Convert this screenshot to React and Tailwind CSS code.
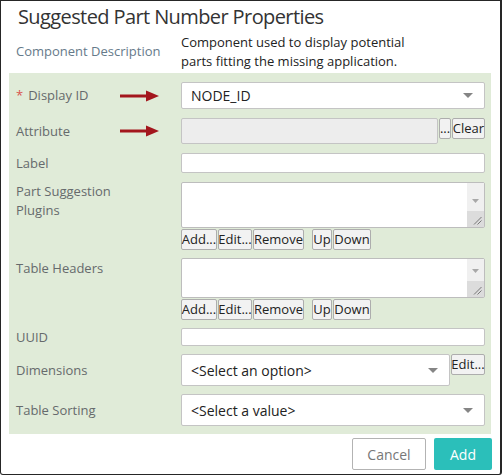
import React from "react";

function Arrow() {
  return (
    <svg width="40" height="12" viewBox="0 0 40 12" className="shrink-0 mr-[21px]">
      <rect x="0" y="4.5" width="28" height="3" fill="#a3161d" />
      <polygon points="26,0.5 39,6 26,11.5" fill="#a3161d" />
    </svg>
  );
}

function Caret() {
  return (
    <svg width="10" height="5" viewBox="0 0 10 5" className="shrink-0">
      <polygon points="0,0 10,0 5,5" fill="#858585" />
    </svg>
  );
}

function Btn({ children, className = "" }) {
  return (
    <div
      className={
        "h-[21px] flex items-center justify-center border border-[#adadad] bg-[#f2f2f2] rounded-[2px] text-[13px] text-[#222] leading-none " +
        className
      }
    >
      {children}
    </div>
  );
}

function Label({ children, className = "" }) {
  return (
    <div className={"text-[13px] leading-[19px] text-[#666a6c] " + className}>
      {children}
    </div>
  );
}

function ListBox({ h }) {
  return (
    <div className={"flex border border-[#bdbdbd] bg-white rounded-[2px] " + h}>
      <div className="flex-1" />
      <div className="w-[17px] flex flex-col">
        <div className="flex-1 bg-[#f0f0f0] flex items-end justify-center pb-[8px]">
          <svg width="7" height="4" viewBox="0 0 7 4">
            <polygon points="0,0 7,0 3.5,4" fill="#a8a8a8" />
          </svg>
        </div>
        <div className="h-[16px] bg-[#dcdcdc] flex items-end justify-end pr-[2px] pb-[2px]">
          <svg width="9" height="9" viewBox="0 0 9 9">
            <line x1="1" y1="8.5" x2="8.5" y2="1" stroke="#777" strokeWidth="1" />
            <line x1="4.5" y1="8.5" x2="8.5" y2="4.5" stroke="#777" strokeWidth="1" />
          </svg>
        </div>
      </div>
    </div>
  );
}

function ListButtons() {
  return (
    <div className="flex mt-[1px]">
      <Btn className="w-[36px]">Add...</Btn>
      <Btn className="w-[34px] ml-[1px]">Edit...</Btn>
      <Btn className="w-[51px] ml-[1px]">Remove</Btn>
      <Btn className="w-[20px] ml-[8px]">Up</Btn>
      <Btn className="w-[38px] ml-[1px]">Down</Btn>
    </div>
  );
}

export default function App() {
  return (
    <div className="w-[502px] h-[475px] bg-white font-['Open_Sans','Noto_Sans',sans-serif]">
      <div className="w-[502px] h-[475px] border border-r-2 border-[#262626] rounded-b-[3px] flex flex-col">
        <div className="pl-[17px] pt-[2px] text-[20px] leading-[28px] tracking-[-0.6px] text-[#333]">
          Suggested Part Number Properties
        </div>
        <div className="flex mt-[2px]">
          <div className="w-[180px] pl-[15px] pt-[9px] text-[13px] leading-[19px] text-[#667a8a]">
            Component Description
          </div>
          <div className="text-[13px] leading-[19px] text-[#222]">
            Component used to display potential
            <br />
            parts fitting the missing application.
          </div>
        </div>
        <div className="ml-[8px] mt-[2px] w-[482px] bg-[#e0ebd8] pl-[7px] pr-[6px] pt-[9px] pb-[8px] flex flex-col">
          {/* Display ID */}
          <div className="flex h-[27px]">
            <div className="w-[165px] flex items-center justify-between">
              <Label className="text-[#333]">
                <span className="text-[#d9534f] mr-[5px]">*</span>Display ID
              </Label>
              <Arrow />
            </div>
            <div className="flex-1 flex items-center justify-between border border-[#c4c4c4] bg-white rounded-[2px] pl-[9px] pr-[11px]">
              <span className="text-[14px] text-[#222]">NODE_ID</span>
              <Caret />
            </div>
          </div>
          {/* Attribute */}
          <div className="flex h-[26px] mt-[9px]">
            <div className="w-[165px] flex items-center justify-between">
              <Label>Attribute</Label>
              <Arrow />
            </div>
            <div className="flex-1 border border-[#c4c4c4] bg-[#ededed] rounded-[2px]" />
            <Btn className="w-[12px] h-[20px] ml-[1px] self-start">...</Btn>
            <Btn className="w-[33px] h-[20px] ml-[1px] self-start">Clear</Btn>
          </div>
          {/* Label */}
          <div className="flex h-[20px] mt-[9px]">
            <div className="w-[165px] flex items-center">
              <Label>Label</Label>
            </div>
            <div className="flex-1 border border-[#c4c4c4] bg-white rounded-[2px]" />
          </div>
          {/* Part Suggestion Plugins */}
          <div className="flex mt-[9px]">
            <div className="w-[165px]">
              <Label>
                Part Suggestion
                <br />
                Plugins
              </Label>
            </div>
            <div className="flex-1 flex flex-col">
              <ListBox h="h-[46px]" />
              <ListButtons />
            </div>
          </div>
          {/* Table Headers */}
          <div className="flex mt-[8px]">
            <div className="w-[165px] pt-[1px]">
              <Label>Table Headers</Label>
            </div>
            <div className="flex-1 flex flex-col">
              <ListBox h="h-[40px]" />
              <ListButtons />
            </div>
          </div>
          {/* UUID */}
          <div className="flex h-[18px] mt-[8px]">
            <div className="w-[165px] flex items-center">
              <Label>UUID</Label>
            </div>
            <div className="flex-1 border border-[#c4c4c4] bg-white rounded-[2px]" />
          </div>
          {/* Dimensions */}
          <div className="flex h-[32px] mt-[8px]">
            <div className="w-[165px] flex items-center">
              <Label>Dimensions</Label>
            </div>
            <div className="flex-1 flex items-center justify-between border border-[#c4c4c4] bg-white rounded-[2px] pl-[9px] pr-[11px]">
              <span className="text-[14px] text-[#222]">&lt;Select an option&gt;</span>
              <Caret />
            </div>
            <Btn className="w-[34px] ml-[1px] self-start">Edit...</Btn>
          </div>
          {/* Table Sorting */}
          <div className="flex h-[32px] mt-[8px]">
            <div className="w-[165px] flex items-center">
              <Label>Table Sorting</Label>
            </div>
            <div className="flex-1 flex items-center justify-between border border-[#c4c4c4] bg-white rounded-[2px] pl-[9px] pr-[11px]">
              <span className="text-[14px] text-[#222]">&lt;Select a value&gt;</span>
              <Caret />
            </div>
          </div>
        </div>
        <div className="flex justify-end pr-[8px] mt-[4px]">
          <div className="w-[74px] h-[32px] border border-[#b3b3b3] bg-white rounded-[2px] flex items-center justify-center text-[14px] text-[#777]">
            Cancel
          </div>
          <div className="w-[58px] h-[32px] ml-[8px] bg-[#2bbfba] rounded-[2px] flex items-center justify-center text-[14px] text-white">
            Add
          </div>
        </div>
      </div>
    </div>
  );
}
